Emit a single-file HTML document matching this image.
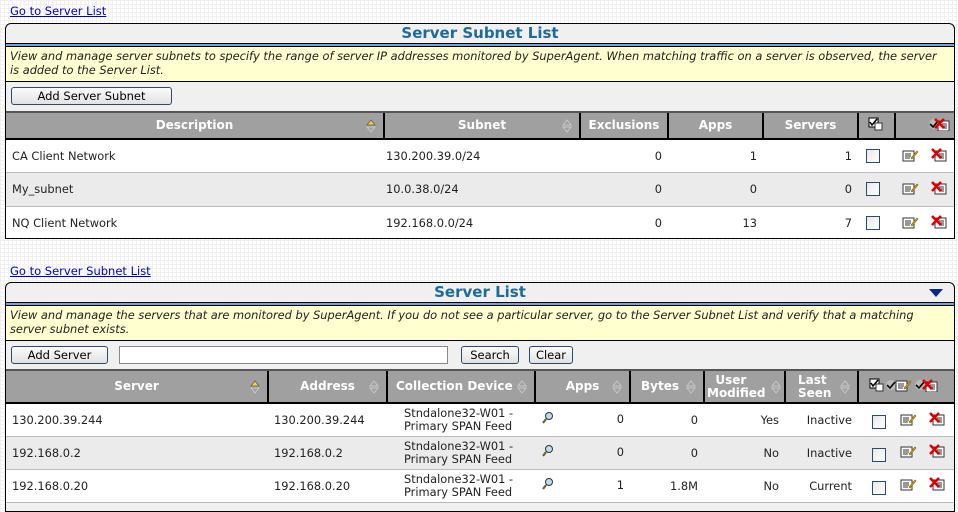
<!DOCTYPE html>
<html><head><meta charset="utf-8"><style>
*{box-sizing:border-box;margin:0;padding:0}
body{width:958px;height:498px;overflow:hidden;font-family:"DejaVu Sans","Liberation Sans",sans-serif;font-size:11.4px;color:#222;background:#fff;background-image:linear-gradient(#f0f0f0 1px,transparent 1px),linear-gradient(90deg,#f0f0f0 1px,transparent 1px);background-size:4px 4px;position:relative}
a{color:#00c;text-decoration:underline;position:absolute;left:10px;font-size:11.5px}
.panel{position:absolute;left:5px;width:950px;border:1px solid #000;border-radius:6px 6px 0 0;background:#f0f0f0;overflow:hidden}
.title{height:20px;text-align:center;font-weight:bold;font-size:15px;color:#1d6a9c;line-height:19px;border-bottom:1px solid #000;position:relative}
.blue{height:3px;background:#6fa6e0;border-bottom:1px solid #000}
.desc{background:#ffffd0;font-style:italic;padding:3px 14px 3px 4px;line-height:13.5px;border-bottom:1px solid #000;font-size:11.4px;height:35px}
.btnrow{position:relative;height:29px;background:#f0f0f0}
.btn{position:absolute;top:5px;height:18px;border:1px solid #2c4a6a;border-radius:3px;background:linear-gradient(#fbfbfb,#e2e2e2);text-align:center;line-height:16px;font-size:11.5px;color:#000}
table{border-collapse:collapse;table-layout:fixed;width:948px}
th{background:#a0a0a0;color:#fff;font-weight:bold;border-left:2px solid #000;border-top:2px solid #555;border-bottom:2px solid #000;position:relative;font-size:12px;line-height:13px}
th:first-child{border-left:none}
td{border-bottom:1px solid #bbb;background:#fff;padding:0 6px;white-space:nowrap}
tr.g td{background:#ebebeb}
.r{text-align:right}
.s{position:absolute;right:6px;top:50%;margin-top:-7px;width:12px;height:14px}
.cb{display:inline-block;width:14px;height:14px;border:1px solid #2c4a6a;background:linear-gradient(135deg,#e8e8e8,#fff);vertical-align:middle}
</style></head><body>
<svg width="0" height="0" style="position:absolute"><defs>
<g id="ed"><rect x="1" y="3" width="11" height="10" fill="#fff" stroke="#333"/><path d="M3 6h6M3 8h6M3 10h5" stroke="#333"/><path d="M9 10l6-7 1 1-6 7z" fill="#e0b020" stroke="#806010" stroke-width=".6"/></g>
<g id="dl"><rect x="4" y="4" width="11" height="10" fill="#fff" stroke="#333"/><path d="M8 7h5M8 9h5M8 11h5" stroke="#333"/><path d="M1 2l9 9M10 2l-9 9" stroke="#d00" stroke-width="2.6"/></g>
<g id="ck"><rect x="1" y="1" width="9" height="9" fill="#fff" stroke="#000"/><path d="M2 5l2 3 5-6" stroke="#000" stroke-width="1.5" fill="none"/><rect x="7" y="6" width="7" height="7" fill="#fff" stroke="#333"/></g>
<g id="so"><path d="M6 1l4 5H2zM6 13l4-5H2z" fill="none" stroke="#c8c8c8"/></g>
<g id="su"><path d="M6 1l4 5H2z" fill="#f8d030" stroke="#555" stroke-width=".7"/><path d="M6 13l4-5H2z" fill="none" stroke="#c8c8c8"/></g>
<g id="mg"><circle cx="8" cy="5" r="3.5" fill="#bde" stroke="#333"/><path d="M5 8l-3 4" stroke="#663" stroke-width="2.2"/></g>
</defs></svg>

<a style="top:4px">Go to Server List</a>
<div class="panel" style="top:23px;height:216px">
<div class="title">Server Subnet List</div>
<div class="blue"></div>
<div class="desc">View and manage server subnets to specify the range of server IP addresses monitored by SuperAgent. When matching traffic on a server is observed, the server is added to the Server List.</div>
<div class="btnrow"><div class="btn" style="left:5px;width:161px">Add Server Subnet</div></div>
<table>
<colgroup><col style="width:378px"><col style="width:196px"><col style="width:88px"><col style="width:95px"><col style="width:95px"><col style="width:37px"><col style="width:59px"></colgroup>
<tr style="height:27px"><th>Description<svg class="s" viewBox="0 0 12 14"><use href="#su"/></svg></th><th>Subnet<svg class="s" viewBox="0 0 12 14"><use href="#so"/></svg></th><th>Exclusions</th><th>Apps</th><th>Servers</th><th style="text-align:left;padding-left:9px"><svg width="15" height="14"><use href="#ck"/></svg></th><th style="text-align:right;padding-right:4px"><svg width="22" height="14"><circle cx="6" cy="7" r="5" fill="#bbb"/><path d="M2 7l3 3 5-6" stroke="#000" stroke-width="1.6" fill="none"/><g transform="translate(6,0)"><use href="#dl"/></g></svg></th></tr>
<tr style="height:33px"><td>CA Client Network</td><td style="padding-left:2px">130.200.39.0/24</td><td class="r">0</td><td class="r">1</td><td class="r">1</td><td style="padding-left:8px"><span class="cb"></span></td><td><svg width="17" height="14" style="margin-left:1px"><use href="#ed"/></svg><svg width="17" height="15" style="margin-left:12px"><use href="#dl"/></svg></td></tr>
<tr class="g" style="height:34px"><td>My_subnet</td><td style="padding-left:2px">10.0.38.0/24</td><td class="r">0</td><td class="r">0</td><td class="r">0</td><td style="padding-left:8px"><span class="cb"></span></td><td><svg width="17" height="14" style="margin-left:1px"><use href="#ed"/></svg><svg width="17" height="15" style="margin-left:12px"><use href="#dl"/></svg></td></tr>
<tr style="height:33px"><td>NQ Client Network</td><td style="padding-left:2px">192.168.0.0/24</td><td class="r">0</td><td class="r">13</td><td class="r">7</td><td style="padding-left:8px"><span class="cb"></span></td><td><svg width="17" height="14" style="margin-left:1px"><use href="#ed"/></svg><svg width="17" height="15" style="margin-left:12px"><use href="#dl"/></svg></td></tr>
</table>
</div>

<a style="top:264px">Go to Server Subnet List</a>
<div class="panel" style="top:282px;height:230px">
<div class="title">Server List<svg width="14" height="9" style="position:absolute;right:11px;top:6px"><path d="M0 0h14L7 8z" fill="#0a2a8a"/></svg></div>
<div class="blue"></div>
<div class="desc">View and manage the servers that are monitored by SuperAgent. If you do not see a particular server, go to the Server Subnet List and verify that a matching server subnet exists.</div>
<div class="btnrow" style="height:28px"><div class="btn" style="left:5px;width:97px">Add Server</div><div style="position:absolute;left:113px;top:5px;width:329px;height:18px;border:1px solid #888;background:#fff"></div><div class="btn" style="left:455px;width:58px">Search</div><div class="btn" style="left:523px;width:44px">Clear</div></div>
<table>
<colgroup><col style="width:262px"><col style="width:119px"><col style="width:148px"><col style="width:95px"><col style="width:74px"><col style="width:81px"><col style="width:73px"><col style="width:96px"></colgroup>
<tr style="height:33px"><th>Server<svg class="s" viewBox="0 0 12 14"><use href="#su"/></svg></th><th>Address<svg class="s" viewBox="0 0 12 14"><use href="#so"/></svg></th><th style="text-align:left;padding-left:8px">Collection Device<svg class="s" viewBox="0 0 12 14"><use href="#so"/></svg></th><th>Apps<svg class="s" viewBox="0 0 12 14"><use href="#so"/></svg></th><th style="text-align:left;padding-left:10px">Bytes<svg class="s" viewBox="0 0 12 14"><use href="#so"/></svg></th><th style="text-align:left;padding-left:2px">&nbsp;&nbsp;User<br>Modified<svg class="s" viewBox="0 0 12 14" style="right:2px"><use href="#so"/></svg></th><th style="text-align:left;padding-left:12px">Last<br>Seen<svg class="s" viewBox="0 0 12 14"><use href="#so"/></svg></th><th style="text-align:left;padding-left:10px"><svg width="15" height="14"><use href="#ck"/></svg><svg width="26" height="14" style="margin-left:2px"><circle cx="5" cy="7" r="5" fill="#bbb"/><path d="M1 7l3 3 5-6" stroke="#000" stroke-width="1.6" fill="none"/><g transform="translate(9,0)"><use href="#ed"/></g></svg><svg width="24" height="14" style="margin-left:3px"><circle cx="5" cy="7" r="5" fill="#bbb"/><path d="M1 7l3 3 5-6" stroke="#000" stroke-width="1.6" fill="none"/><g transform="translate(7,0)"><use href="#dl"/></g></svg></th></tr>
<tr style="height:33px"><td>130.200.39.244</td><td>130.200.39.244</td><td style="line-height:13px;padding-left:17px">Stndalone32-W01 -<br>Primary SPAN Feed</td><td><svg width="16" height="14"><use href="#mg"/></svg><span style="float:right;margin-top:1px">0</span></td><td class="r">0</td><td class="r">Yes</td><td class="r">Inactive</td><td style="padding-left:14px"><span class="cb"></span><svg width="17" height="14" style="margin-left:14px"><use href="#ed"/></svg><svg width="17" height="15" style="margin-left:12px"><use href="#dl"/></svg></td></tr>
<tr class="g" style="height:33px"><td>192.168.0.2</td><td>192.168.0.2</td><td style="line-height:13px;padding-left:17px">Stndalone32-W01 -<br>Primary SPAN Feed</td><td><svg width="16" height="14"><use href="#mg"/></svg><span style="float:right;margin-top:1px">0</span></td><td class="r">0</td><td class="r">No</td><td class="r">Inactive</td><td style="padding-left:14px"><span class="cb"></span><svg width="17" height="14" style="margin-left:14px"><use href="#ed"/></svg><svg width="17" height="15" style="margin-left:12px"><use href="#dl"/></svg></td></tr>
<tr style="height:33px"><td>192.168.0.20</td><td>192.168.0.20</td><td style="line-height:13px;padding-left:17px">Stndalone32-W01 -<br>Primary SPAN Feed</td><td><svg width="16" height="14"><use href="#mg"/></svg><span style="float:right;margin-top:1px">1</span></td><td class="r">1.8M</td><td class="r">No</td><td class="r">Current</td><td style="padding-left:14px"><span class="cb"></span><svg width="17" height="14" style="margin-left:14px"><use href="#ed"/></svg><svg width="17" height="15" style="margin-left:12px"><use href="#dl"/></svg></td></tr>
</table>
</div>
</body></html>
